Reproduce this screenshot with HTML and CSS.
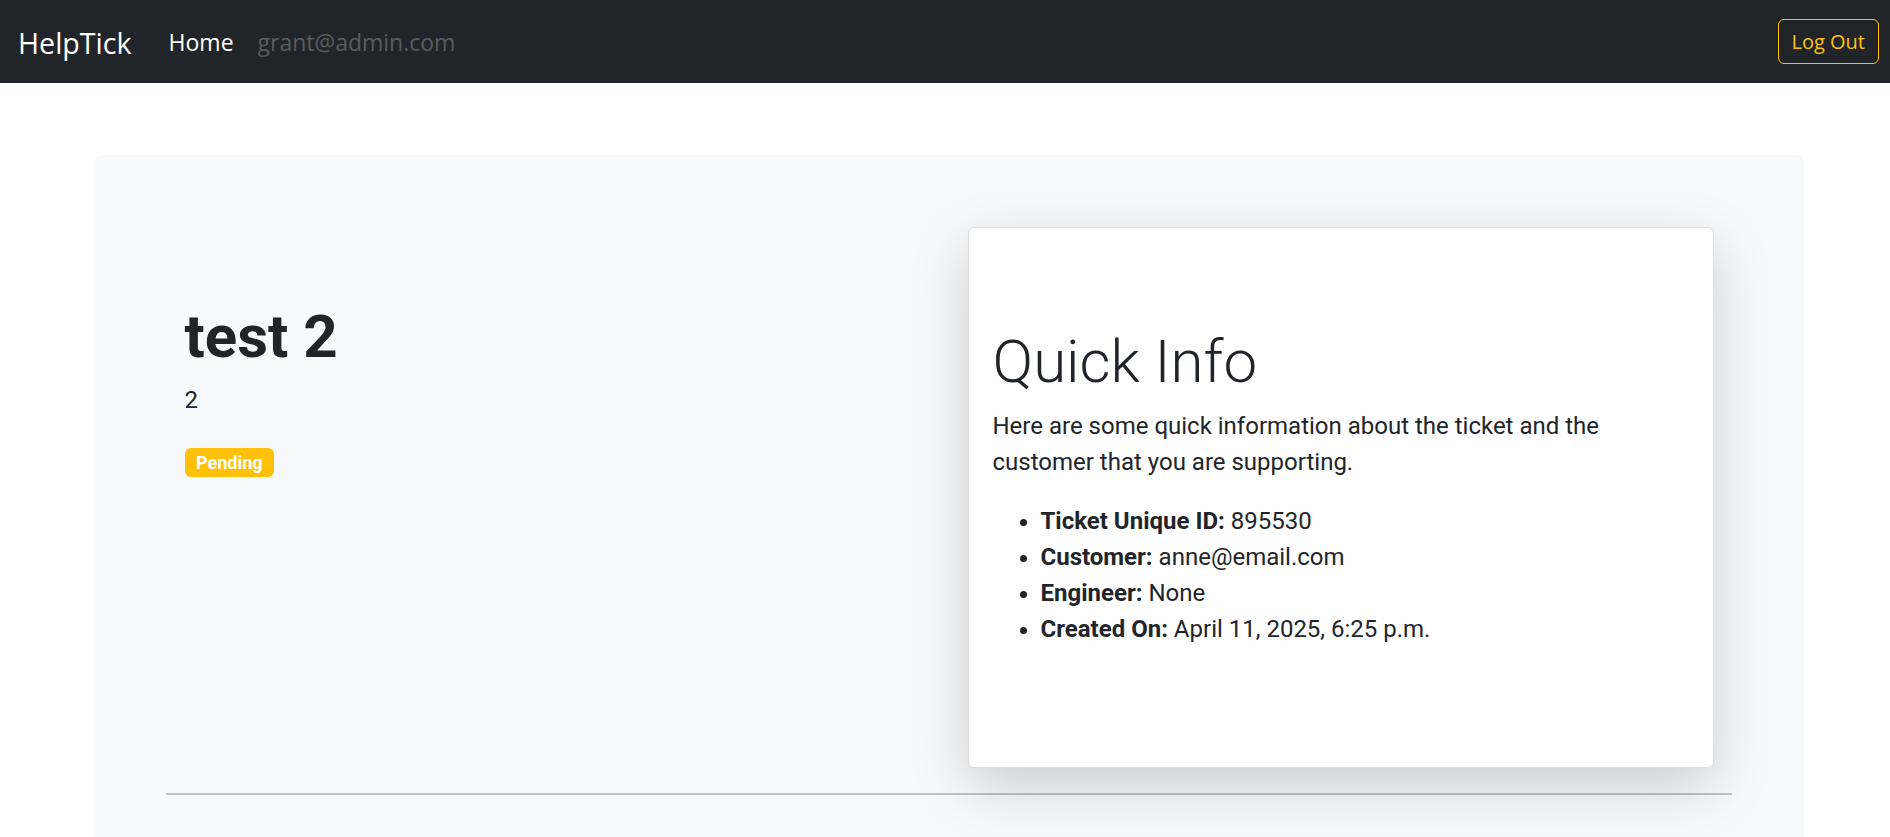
FILE: index.html
```html
<!DOCTYPE html>
<html lang="en">
<head>
<meta charset="utf-8">
<title>HelpTick - test 2</title>
<link rel="stylesheet" href="styles.css">
</head>
<body>
<nav class="navbar">
  <a class="brand" href="#">HelpTick</a>
  <div class="nav-links">
    <a class="nav-link active" href="#">Home</a>
    <span class="nav-link disabled">grant@admin.com</span>
  </div>
  <button class="btn-logout" type="button">Log Out</button>
</nav>

<main class="jumbotron">
  <div class="row">
    <section class="col col-left">
      <h1 class="ticket-title">test 2</h1>
      <p class="lead">2</p>
      <div class="status"><span class="badge">Pending</span></div>
    </section>
    <section class="col col-right">
      <div class="card">
        <h2 class="display">Quick Info</h2>
        <p class="lead card-lead">Here are some quick information about the ticket and the customer that you are supporting.</p>
        <ul class="info-list">
          <li><strong>Ticket Unique ID:</strong> 895530</li>
          <li><strong>Customer:</strong> anne@email.com</li>
          <li><strong>Engineer:</strong> None</li>
          <li><strong>Created On:</strong> April 11, 2025, 6:25 p.m.</li>
        </ul>
      </div>
    </section>
  </div>
  <hr class="divider">
</main>
</body>
</html>
```

FILE: styles.css
```css
html, body {
  margin: 0;
  padding: 0;
}
body {
  height: 100vh;
  overflow: hidden;
  background: #fff;
  color: #212529;
  font-family: Roboto, "Liberation Sans", sans-serif;
}

.navbar {
  display: flex;
  align-items: center;
  height: 83px;
  box-sizing: border-box;
  background: #212529;
  padding: 0 11px 0 18px;
  font-family: "Open Sans", "Noto Sans", sans-serif;
}
.brand {
  color: #fff;
  text-decoration: none;
  font-size: 28.6px;
  line-height: 40px;
  margin-right: 37px;
  margin-top: 2px;
}
.nav-links {
  display: flex;
  align-items: center;
  gap: 24px;
}
.nav-link {
  font-size: 23px;
  line-height: 34px;
  text-decoration: none;
}
.nav-link.active { color: #fff; }
.nav-link.disabled { color: #595c5f; }

.btn-logout {
  margin-left: auto;
  background: transparent;
  border: 1px solid #ffc107;
  border-radius: 6px;
  color: #ffc107;
  font-family: "Open Sans", "Noto Sans", sans-serif;
  font-size: 20px;
  line-height: 30px;
  padding: 6.5px 13px;
  cursor: pointer;
}

.jumbotron {
  margin: 72px 86px 0 94px;
  background: #f8f9fa;
  border-radius: 8px;
  padding: 72px 72px 72px;
}
.row {
  display: grid;
  grid-template-columns: 1fr 1fr;
}
.col {
  padding: 0 18.5px;
}
.col-left {
  padding-top: 73.5px;
}
.ticket-title {
  font-size: 60px;
  font-weight: 700;
  line-height: 1.2;
  margin: 0 0 9.6px;
}
.lead {
  font-size: 24px;
  line-height: 36px;
  margin: 0;
}
.status {
  display: flex;
  margin-top: 30px;
}
.badge {
  background: #ffc107;
  color: #fff;
  font-size: 18px;
  font-weight: 700;
  line-height: 18px;
  padding: 5.5px 11.5px;
  border-radius: 6px;
}

.card {
  background: #fff;
  border: 1px solid rgba(0, 0, 0, 0.13);
  border-radius: 6px;
  box-shadow: 0 19px 58px rgba(0, 0, 0, 0.175);
  padding: 98px 24px 120px;
}
.display {
  font-size: 60px;
  font-weight: 300;
  line-height: 1.2;
  margin: 0 0 9.6px;
}
.card-lead {
  margin-bottom: 23px;
}
.info-list {
  margin: 0;
  padding-left: 48px;
  font-size: 24px;
  line-height: 36px;
}
.info-list strong {
  font-weight: 700;
}

.divider {
  margin: 25px 0 0;
  border: 0;
  border-top: 2px solid #c1c2c4;
  height: 0;
}
```
